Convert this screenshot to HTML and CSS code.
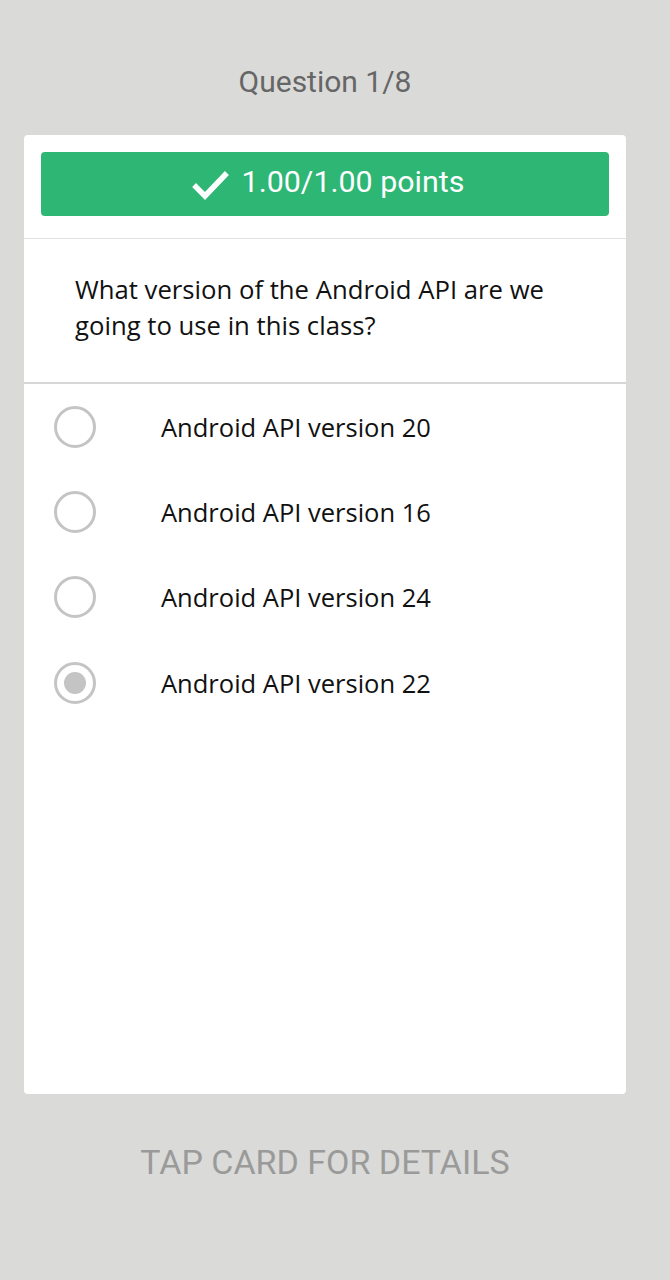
FILE: index.html
```html
<!DOCTYPE html>
<html>
<head>
<meta charset="utf-8">
<link rel="stylesheet" href="styles.css">
</head>
<body>
<div class="page">
  <div class="title">Question 1/8</div>
  <div class="card">
    <div class="banner">
      <svg class="check" width="38" height="32" viewBox="0 0 38 32"><path d="M4 17 L13 26 L33 5" fill="none" stroke="#fff" stroke-width="5.5" stroke-linecap="square" stroke-linejoin="miter"/></svg>
      <span>1.00/1.00 points</span>
    </div>
    <div class="question">What version of the Android API are we going to use in this class?</div>
    <div class="options">
      <div class="option"><span class="radio"></span><span class="label">Android API version 20</span></div>
      <div class="option"><span class="radio"></span><span class="label">Android API version 16</span></div>
      <div class="option"><span class="radio"></span><span class="label">Android API version 24</span></div>
      <div class="option"><span class="radio selected"></span><span class="label">Android API version 22</span></div>
    </div>
  </div>
  <div class="footer">TAP CARD FOR DETAILS</div>
</div>
</body>
</html>
```
FILE: styles.css
```css
html, body {
  margin: 0;
  padding: 0;
  background: #dadad8;
}
.page {
  display: flex;
  flex-direction: column;
  width: 650px;
}
.title {
  padding-top: 60px;
  height: 44px;
  line-height: 44px;
  text-align: center;
  font-family: Roboto, sans-serif;
  font-size: 30px;
  color: #666;
}
.card {
  margin: 31px 24px 0 24px;
  height: 959px;
  background: #fff;
  border-radius: 4px;
  display: flex;
  flex-direction: column;
}
.banner {
  margin: 17px 17px 0 17px;
  height: 64px;
  background: #2db674;
  border-radius: 4px;
  display: flex;
  align-items: center;
  justify-content: center;
  gap: 12px;
  font-family: Roboto, sans-serif;
  font-size: 30.4px;
  color: #fff;
}
.check {
  margin-top: 4px;
  margin-left: 6px;
}
.banner span {
  margin-top: -5px;
}
.question {
  margin-top: 22px;
  border-top: 1px solid #e2e2e2;
  border-bottom: 2px solid #d6d6d6;
  padding: 33px 40px 38px 51px;
  font-family: "Open Sans", sans-serif;
  font-size: 25.7px;
  line-height: 36px;
  color: #111;
}
.options {
  display: flex;
  flex-direction: column;
}
.option {
  height: 85.33px;
  display: flex;
  align-items: center;
  padding-left: 30px;
}
.radio {
  width: 36px;
  height: 36px;
  border: 3px solid #c4c4c4;
  border-radius: 50%;
  display: flex;
  align-items: center;
  justify-content: center;
  flex-shrink: 0;
}
.radio.selected::after {
  content: "";
  width: 22px;
  height: 22px;
  border-radius: 50%;
  background: #c4c4c4;
}
.label {
  margin-left: 65px;
  font-family: "Open Sans", sans-serif;
  font-size: 25.5px;
  color: #111;
}
.footer {
  margin-top: 46px;
  height: 44px;
  line-height: 44px;
  text-align: center;
  font-family: Roboto, sans-serif;
  font-size: 34px;
  color: #9a9a9a;
}
```
